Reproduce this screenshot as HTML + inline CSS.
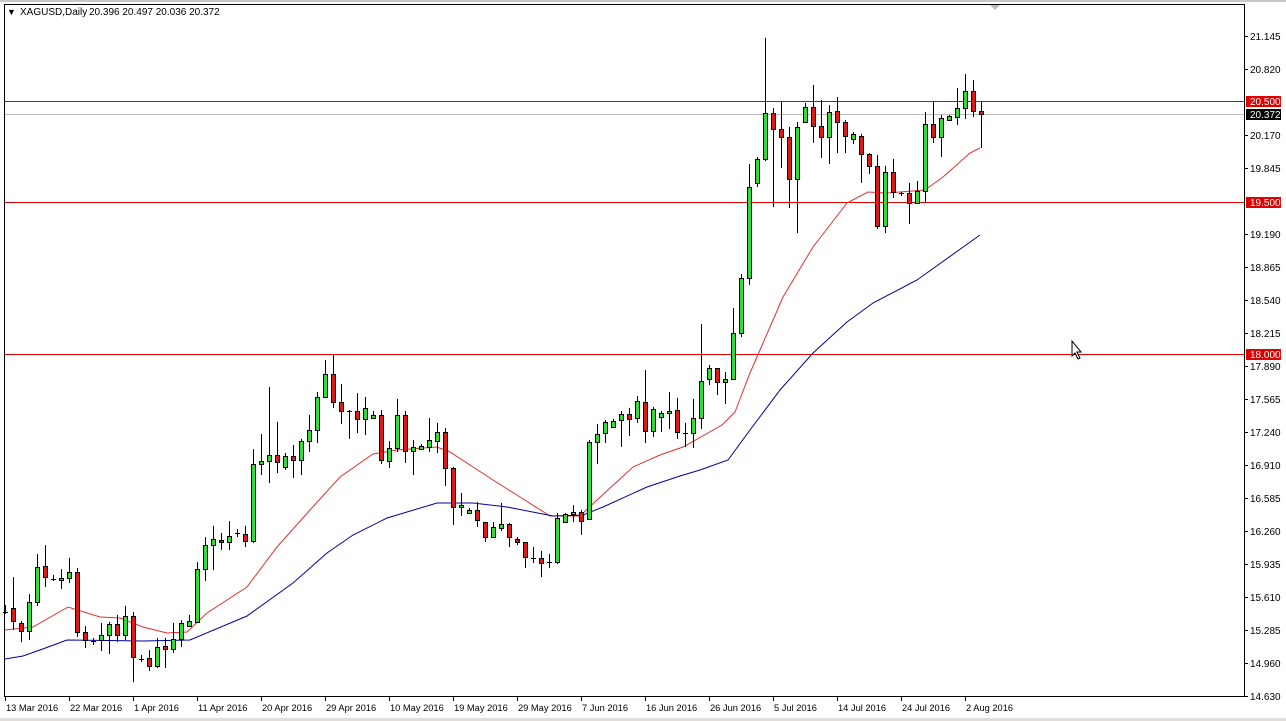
<!DOCTYPE html>
<html><head><meta charset="utf-8"><style>
html,body{margin:0;padding:0;background:#fff;width:1286px;height:721px;overflow:hidden}
svg{display:block;font-family:"Liberation Sans",sans-serif;font-size:10px}
</style></head><body>
<svg id="s" width="1286" height="721" xmlns="http://www.w3.org/2000/svg">
<rect x="0" y="0" width="1286" height="721" fill="#fff"/>
<rect x="0" y="0" width="1286" height="2" fill="#c8c8c8"/>
<rect x="4.5" y="4.5" width="1240" height="692" fill="#fff" stroke="#000"/>
<line x1="5" y1="114.5" x2="1244" y2="114.5" stroke="#bbb"/>
<line x1="5" y1="101.5" x2="1244" y2="101.5" stroke="#e00000"/>
<line x1="5" y1="202.5" x2="1244" y2="202.5" stroke="#e00000"/>
<line x1="5" y1="354.5" x2="1244" y2="354.5" stroke="#e00000"/>
<polyline fill="none" stroke="#e03030" stroke-width="1" points="5,630 33,627 68,607 100,617 120,618 143,627 167,633 187,632 207,613 247,587 277,547 310,510 340,477 373,454 397,450 437,447 450,452 493,480 520,497 550,516 580,516 597,500 633,467 660,455 683,447 722,425 735,412 750,373 783,297 813,247 847,203 868,192 887,193 925,190 943,177 970,153 980,148"/>
<polyline fill="none" stroke="#0000a0" stroke-width="1" points="5,659 23,656 40,650 67,640 143,641 190,640 247,616 293,583 327,553 353,535 387,518 437,503 473,503 507,507 553,516 583,515 603,507 647,487 680,476 700,470 728,460 750,430 780,390 813,353 847,322 873,303 917,280 980,235"/>
<g id="c"></g>
<text x="7" y="15" font-size="9">▼</text>
<text x="20" y="15" font-size="10">XAGUSD,Daily</text>
<text x="89" y="15" font-size="10">20.396 20.497 20.036 20.372</text>
<polygon points="990,5 1000,5 995,10" fill="#bbb"/>
<g id="ax"></g>
<path d="M1072,341 l0,15 l3,-3 l3,6 l2,-1 l-3,-6 l4,0 z" fill="#fff" stroke="#000" stroke-width="1"/>
</svg>
<script>
var d="612,607,605,614;608,621,577,630,r;623,631,621,642,r;602,631,594,640,g;567,602,554,606,g;566,577,545,587,r;579,579,575,581,d;578,580,569,589,g;572,578,558,583,g;572,632,568,637,r;632,640,626,648,r;641,641,638,645,d;635,640,623,651,g;624,635,622,654,g;624,635,615,642,r;616,635,606,640,g;616,657,612,682,r;659,659,655,662,d;658,666,650,671,r;647,666,638,668,g;646,649,638,668,r;639,649,623,653,g;623,639,620,647,g;621,626,615,627,g;569,622,562,623,g;545,569,537,581,g;539,545,526,570,g;540,542,533,550,r;536,542,521,550,g;533,533,529,537,d;534,541,526,547,r;464,541,449,543,g;461,464,434,475,g;455,461,387,483,g;455,462,422,473,r;456,467,453,470,g;456,460,445,478,r;441,460,439,475,g;430,441,415,452,g;397,430,392,443,g;374,397,360,398,g;374,402,355,408,r;402,411,384,424,r;411,411,410,439,d;411,419,393,433,r;408,419,397,435,g;415,418,411,419,g;415,460,410,464,r;448,461,441,468,g;415,448,399,452,g;415,451,411,463,r;447,451,440,475,g;446,449,444,450,g;440,447,418,452,g;432,441,423,453,g;432,468,428,486,r;468,507,467,525,r;505,507,493,516,g;510,513,508,514,g;510,520,502,527,r;522,537,522,542,r;527,537,522,537,g;524,528,503,531,g;524,537,523,547,r;539,542,537,545,r;542,557,542,568,r;558,558,547,563,d;558,563,551,577,r;562,562,554,568,d;518,562,513,564,g;514,522,513,523,g;512,514,505,522,g;512,521,510,535,r;442,519,440,520,g;434,442,424,464,g;422,433,420,443,g;421,427,419,427,g;414,420,411,447,g;414,419,408,436,r;401,418,396,423,g;402,431,370,443,r;409,431,407,437,g;413,417,411,432,g;411,413,392,429,g;410,432,398,439,r;433,433,423,447,d;418,433,399,448,g;381,418,324,429,g;368,379,365,385,g;368,382,368,395,r;379,382,372,404,g;333,379,308,379,g;278,333,274,337,g;187,278,164,285,g;159,183,157,187,g;113,159,38,161,g;113,129,108,207,r;129,137,102,168,r;137,179,127,208,r;127,179,122,233,g;107,122,103,123,g;107,126,85,143,r;126,137,100,158,r;112,137,105,164,g;111,122,97,153,r;122,136,120,153,r;134,139,132,144,g;136,154,134,183,r;154,166,153,174,r;166,226,155,229,r;172,226,166,233,g;172,192,159,198,r;193,193,192,196,d;193,203,183,224,r;191,203,181,204,g;124,191,112,202,g;124,137,102,143,r;118,137,115,157,g;116,120,115,121,g;108,117,88,125,g;91,108,74,119,g;91,111,80,117,r;111,114,102,148,r".split(";");
var h="";
d.forEach(function(s,i){var a=s.split(","),x=5+8*i,t=+a[0],b=+a[1],hi=+a[2],lo=+a[3],c=a[4]||"g";
h+='<line x1="'+(x+.5)+'" y1="'+hi+'" x2="'+(x+.5)+'" y2="'+lo+'" stroke="#000"/>';
if(c=="d"||b-t<1){h+='<line x1="'+(x-2)+'" y1="'+(t+.5)+'" x2="'+(x+3)+'" y2="'+(t+.5)+'" stroke="#000"/>';}
else{h+='<rect x="'+(x-1.5)+'" y="'+(t+.5)+'" width="4" height="'+(b-t)+'" fill="'+(c=="g"?"#2ee02e":"#e01818")+'" stroke="#000"/>';}
});
document.getElementById("c").innerHTML=h;
var ax="";
[["21.145",36],["20.820",69],["20.170",135],["19.845",168],["19.190",234],["18.865",267],["18.540",300],["18.215",333],["17.890",366],["17.565",399],["17.240",432],["16.910",465],["16.585",498],["16.260",531],["15.935",564],["15.610",597],["15.285",630],["14.960",663],["14.630",696]].forEach(function(p){
ax+='<line x1="1245" y1="'+(p[1]+.5)+'" x2="1248" y2="'+(p[1]+.5)+'" stroke="#000"/><text x="1250" y="'+(p[1]+4)+'">'+p[0]+'</text>';});
[["20.500",101,"#e00000"],["20.372",114,"#000"],["19.500",202,"#e00000"],["18.000",354,"#e00000"]].forEach(function(p){
ax+='<rect x="1246" y="'+(p[1]-5)+'" width="35" height="11" fill="'+p[2]+'"/><text x="1250" y="'+(p[1]+4)+'" fill="#fff">'+p[0]+'</text>';});
[["13 Mar 2016",5],["22 Mar 2016",69],["1 Apr 2016",133],["11 Apr 2016",197],["20 Apr 2016",261],["29 Apr 2016",325],["10 May 2016",389],["19 May 2016",453],["29 May 2016",517],["7 Jun 2016",581],["16 Jun 2016",645],["26 Jun 2016",709],["5 Jul 2016",773],["14 Jul 2016",837],["24 Jul 2016",901],["2 Aug 2016",965]].forEach(function(p){
ax+='<line x1="'+(p[1]+.5)+'" y1="697" x2="'+(p[1]+.5)+'" y2="701" stroke="#000"/><text x="'+(p[1]+1)+'" y="711" font-size="9.3">'+p[0]+'</text>';});
ax+='<rect x="0" y="718" width="1286" height="3" fill="#e0ddd6"/>';
document.getElementById("ax").innerHTML=ax;
</script>
</body></html>
